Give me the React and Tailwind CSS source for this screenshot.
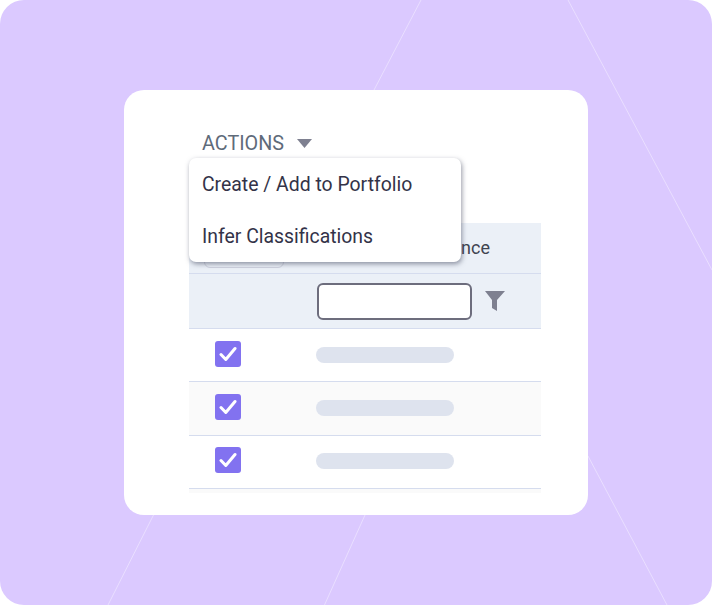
import React from 'react';

const Checkbox = () => (
    <div className="w-[26px] h-[26px] ml-[26px] mb-[3px] rounded-[3px] bg-[#8272f0] flex items-center justify-center">
        <svg width="18" height="16" viewBox="0 0 18 16" fill="none">
            <path d="M2 8.5L6.8 13.5L16 2.5" stroke="white" strokeWidth="3" strokeLinecap="round" strokeLinejoin="round" />
        </svg>
    </div>
);

const Row = ({ striped }) => (
    <div className={`h-[53.3px] flex items-center border-b-[1.5px] border-[#d5dcee] ${striped ? 'bg-[#fafafa]' : 'bg-white'}`}>
        <div className="w-[127px] shrink-0">
            <Checkbox />
        </div>
        <div className="w-[138px] h-4 mb-px rounded-full bg-[#dee3ee]" />
    </div>
);

export default function App() {
    return (
        <div className="w-[712px] h-[605px] bg-white font-['Roboto',sans-serif]">
            <div className="relative w-full h-full rounded-[24px] bg-[#dbc9ff] overflow-hidden flex items-center justify-center">
                {/* Decoration */}
                <svg className="absolute inset-0" width="712" height="605" viewBox="0 0 712 605" fill="none">
                    <g stroke="white" strokeOpacity="0.4" strokeWidth="1">
                        <path d="M421 0L374 90" />
                        <path d="M568 0L712 270" />
                        <path d="M153.5 515L108 605" />
                        <path d="M365 515L324.5 605" />
                        <path d="M588 456L667 605" />
                    </g>
                </svg>

                <div className="relative w-[464px] h-[425px] bg-white rounded-[20px] pt-[41px] pl-[65px] pr-[47px]">
                    <div className="flex items-center h-6 pl-[13px] text-[#5f6b7a] text-[19.8px] leading-6">
                        <span className="pt-px">ACTIONS</span>
                        <svg className="ml-[13px]" width="15" height="9" viewBox="0 0 15 9">
                            <path d="M0 0H15L7.5 9Z" fill="#7e8090" />
                        </svg>
                    </div>

                    <div className="relative mt-[68px]">
                        {/* Dropdown */}
                        <div className="absolute left-0 top-[-65px] z-10 w-[272px] h-[104px] pt-[2px] rounded-[7px] bg-white shadow-[1px_2px_5px_rgba(60,65,90,0.55)] flex flex-col justify-center gap-[28px] pl-[13px] text-[#333348] text-[19.4px] leading-6">
                            <div>Create / Add to Portfolio</div>
                            <div>Infer Classifications</div>
                        </div>

                        <div className="h-[51px] pb-[2px] bg-[#ebf0f7] border-b-[1.5px] border-[#d5dcee] flex items-center">
                            <div className="self-end mb-[3px] ml-[15px] w-20 h-[26px] rounded-md border border-[#cfd3de]" />
                            <div className="ml-auto mr-[51px] text-[#3f4450] text-[18px]">Relevance</div>
                        </div>
                        <div className="h-[55px] bg-[#ebf0f7] border-b-[1.5px] border-[#d5dcee] flex items-center">
                            <div className="ml-[128px] w-[155px] h-[37px] rounded-md border-2 border-[#6d6d7d] bg-white" />
                            <svg className="ml-[13px]" width="20" height="20" viewBox="0 0 20 20">
                                <path d="M0 0H20L12 9V20L7 17V9Z" fill="#7e8090" />
                            </svg>
                        </div>
                        <Row />
                        <Row striped />
                        <Row />
                        <div className="h-1 bg-[#fafafa]" />
                    </div>
                </div>
            </div>
        </div>
    );
}
